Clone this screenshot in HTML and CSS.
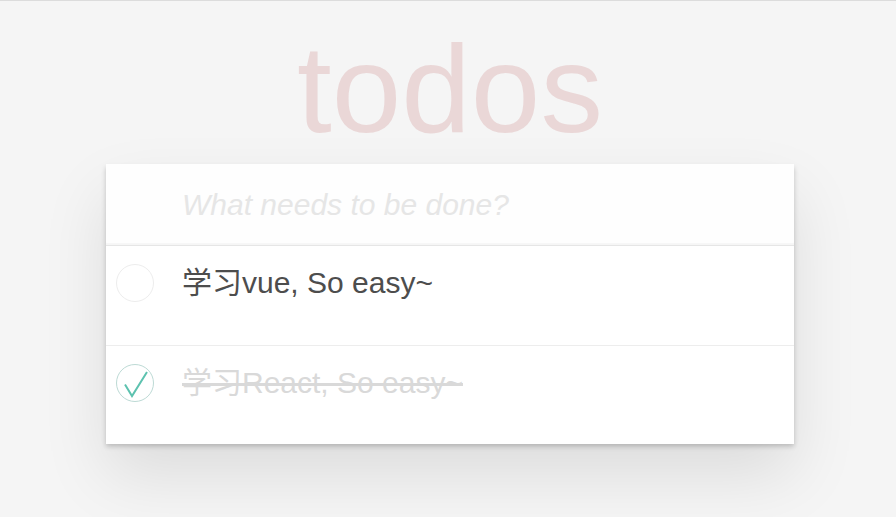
FILE: index.html
```html
<!DOCTYPE html>
<html lang="zh">
<head>
<meta charset="utf-8">
<title>todos</title>
<link rel="stylesheet" href="styles.css">
</head>
<body>
<h1 class="title">todos</h1>
<section class="app">
  <header class="header">
    <input class="new-todo" placeholder="What needs to be done?">
  </header>
  <ul class="list">
    <li class="item">
      <span class="toggle"></span>
      <label class="label">学习vue, So easy~</label>
    </li>
    <li class="item done">
      <span class="toggle checked">
        <svg width="38" height="38" viewBox="0 0 38 38"><path d="M9 20.5 L16 32 L31 8" fill="none" stroke="#5dc2af" stroke-width="2"/></svg>
      </span>
      <label class="label">学习React, So easy~</label>
    </li>
  </ul>
</section>
</body>
</html>
```
FILE: styles.css
```css
html, body { margin: 0; padding: 0; }
body {
  background: #f5f5f5;
  border-top: 1px solid #dcdcdc;
  font-family: "Liberation Sans", Arial, "Noto Sans CJK SC", sans-serif;
  color: #4d4d4d;
  min-height: 516px;
}
.title {
  margin: 18px 0 5px 4px;
  font-size: 125px;
  line-height: 140px;
  font-weight: normal;
  text-align: center;
  color: rgba(175, 47, 47, 0.15);
}
.app {
  width: 688px;
  margin: 0 auto;
  position: relative;
  left: 2px;
  background: #fff;
  box-shadow: 0 2.5px 5px 0 rgba(0,0,0,0.2), 0 31px 62px 0 rgba(0,0,0,0.1);
}
.header { display: flex; }
.new-todo {
  flex: 1;
  box-sizing: border-box;
  height: 81px;
  margin: 0;
  border: 0;
  outline: none;
  padding: 0 20px 0 76px;
  font-family: inherit;
  font-size: 30px;
  background: rgba(0,0,0,0.003);
  box-shadow: inset 0 -2px 1px rgba(0,0,0,0.03);
  color: #4d4d4d;
}
.new-todo::placeholder { font-style: italic; color: #e6e6e6; }
.list {
  list-style: none;
  margin: 0;
  padding: 0;
  border-top: 1px solid #e6e6e6;
}
.item {
  display: flex;
  align-items: flex-start;
  gap: 28px;
  height: 100px;
  box-sizing: border-box;
  padding: 18px 0 0 10px;
  border-bottom: 1px solid #ededed;
  font-size: 30px;
}
.item:last-child { border-bottom: none; height: 98px; }
.toggle {
  width: 38px;
  height: 38px;
  box-sizing: border-box;
  border: 1px solid #ededed;
  border-radius: 50%;
  flex: none;
  position: relative;
}
.toggle.checked { border-color: #bddad5; }
.toggle svg { position: absolute; left: -1px; top: -1px; }
.label { line-height: 38px; }
.done .label { color: #d9d9d9; text-decoration: line-through; }
```
